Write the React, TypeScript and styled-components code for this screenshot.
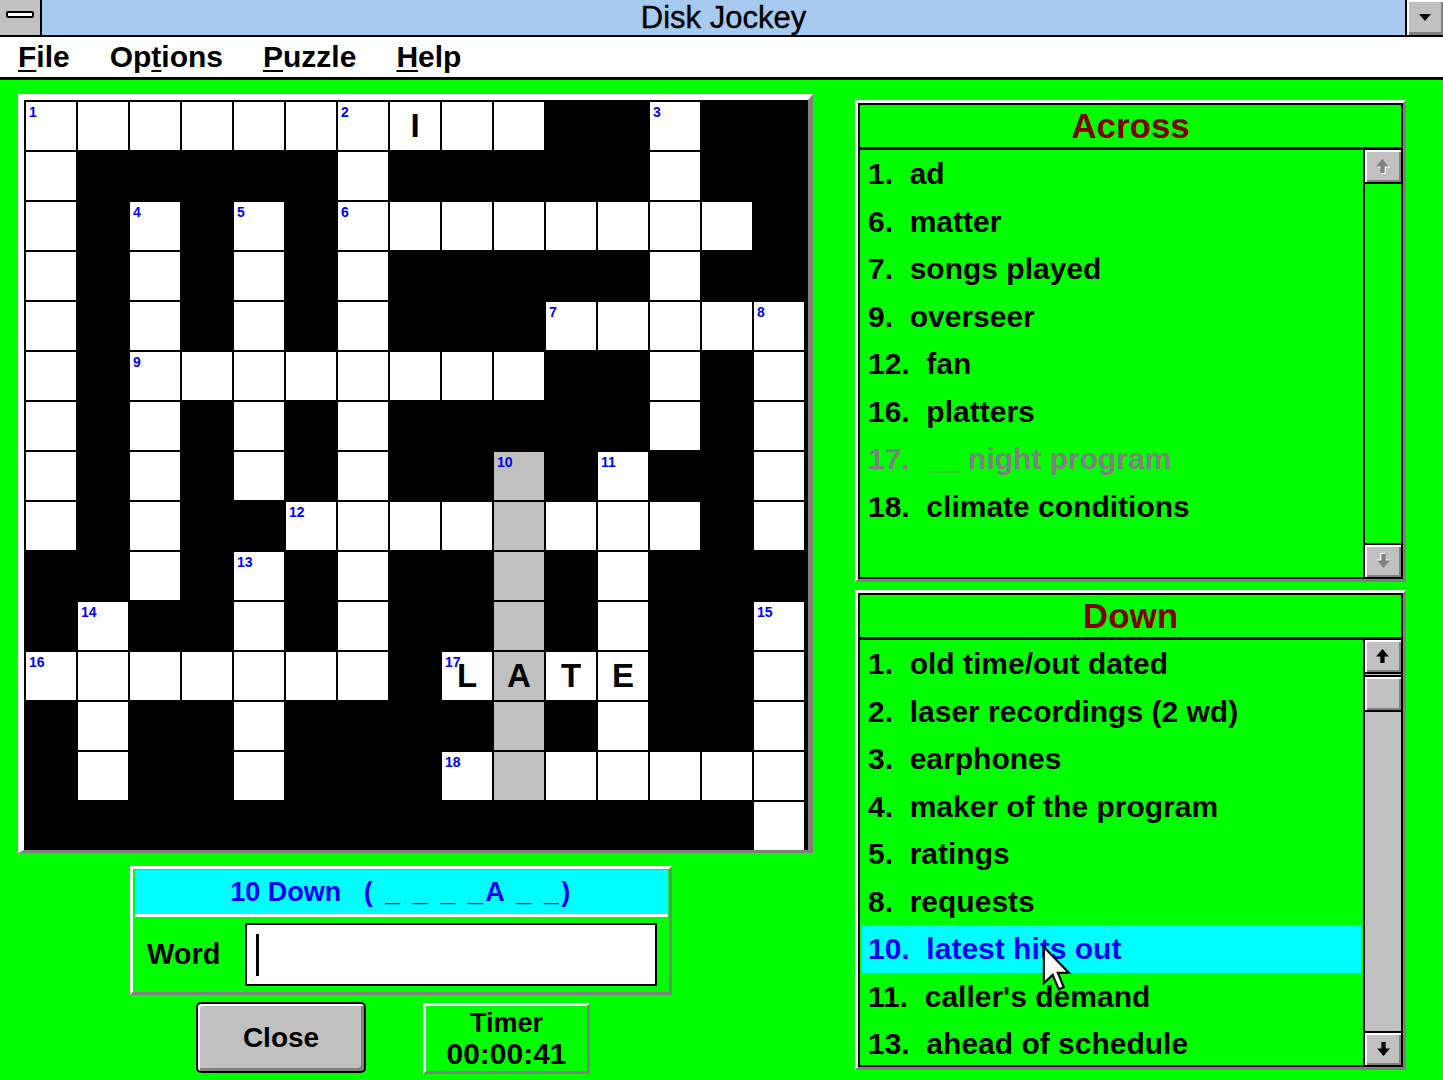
import React from "react";
import styled, { createGlobalStyle } from "styled-components";

const GlobalStyle = createGlobalStyle`
  html, body {
    margin: 0;
    padding: 0;
  }
  body {
    width: 1443px;
    height: 1080px;
    overflow: hidden;
    background: #00ff00;
    font-family: "Liberation Sans", Arial, sans-serif;
  }
`;

// grid map: '#' black, '.' white, 'g' highlighted (current word)
const GRID = [
  "..........##.##",
  ".#####.#####.##",
  ".#.#.#........#",
  ".#.#.#.#####.##",
  ".#.#.#.###.....",
  ".#........##.#.",
  ".#.#.#.#####.#.",
  ".#.#.#.##g#.##.",
  ".#.##....g...#.",
  "##.#.#.##g#.###",
  "#.##.#.##g#.##.",
  ".......#.g..##.",
  "#.##.####g#.##.",
  "#.##.###.g.....",
  "##############.",
];

const NUMBERS: Record<string, number> = {
  "0-0": 1, "0-6": 2, "0-12": 3, "2-2": 4, "2-4": 5, "2-6": 6,
  "4-10": 7, "4-14": 8, "5-2": 9, "7-9": 10, "7-11": 11, "8-5": 12,
  "9-4": 13, "10-1": 14, "10-14": 15, "11-0": 16, "11-8": 17, "13-8": 18,
};

const LETTERS: Record<string, string> = {
  "0-7": "I", "11-8": "L", "11-9": "A", "11-10": "T", "11-11": "E",
};

type Clue = { n: number; text: string; state?: "done" | "active" };

const ACROSS: Clue[] = [
  { n: 1, text: "ad" },
  { n: 6, text: "matter" },
  { n: 7, text: "songs played" },
  { n: 9, text: "overseer" },
  { n: 12, text: "fan" },
  { n: 16, text: "platters" },
  { n: 17, text: "__ night program", state: "done" },
  { n: 18, text: "climate conditions" },
];

const DOWN: Clue[] = [
  { n: 1, text: "old time/out dated" },
  { n: 2, text: "laser recordings (2 wd)" },
  { n: 3, text: "earphones" },
  { n: 4, text: "maker of the program" },
  { n: 5, text: "ratings" },
  { n: 8, text: "requests" },
  { n: 10, text: "latest hits out", state: "active" },
  { n: 11, text: "caller's demand" },
  { n: 13, text: "ahead of schedule" },
];

function ArrowIcon({ dir, dim }: { dir: "up" | "down"; dim?: boolean }) {
  const pts = "7,1 13,8 9,8 9,14 5,14 5,8 1,8";
  return (
    <svg width="16" height="16" viewBox="0 0 15 15" style={{ transform: dir === "down" ? "rotate(180deg)" : undefined }}>
      {dim && <polygon points={pts} fill="#ffffff" transform="translate(1 1)" />}
      <polygon points={pts} fill={dim ? "#808080" : "#000000"} />
    </svg>
  );
}

function Pointer() {
  return (
    <svg width="30" height="46" viewBox="0 0 13 21">
      <polygon
        points="0.5,0.5 0.5,17 4.5,13.2 7.3,19.8 9.6,18.8 6.9,12.3 12,12.3"
        fill="#ffffff"
        stroke="#000000"
        strokeWidth="1"
        strokeLinejoin="miter"
      />
    </svg>
  );
}

function ClueBox({ title, clues, scroll }: { title: string; clues: Clue[]; scroll: "idle" | "live" }) {
  return (
    <Panel>
      <PanelInner>
        <PanelHeader>{title}</PanelHeader>
        <PanelBody>
          <ClueList>
            {clues.map((c) => (
              <ClueRow key={c.n} $state={c.state}>
                {`${c.n}.  ${c.text}`}
                {c.state === "active" && (
                  <PointerSpot>
                    <Pointer />
                  </PointerSpot>
                )}
              </ClueRow>
            ))}
          </ClueList>
          <ScrollBar $live={scroll === "live"}>
            <ScrollButton $edge="top">
              <ArrowIcon dir="up" dim={scroll === "idle"} />
            </ScrollButton>
            {scroll === "live" && <ScrollThumb />}
            <ScrollSpacer />
            <ScrollButton $edge="bottom">
              <ArrowIcon dir="down" dim={scroll === "idle"} />
            </ScrollButton>
          </ScrollBar>
        </PanelBody>
      </PanelInner>
    </Panel>
  );
}

export default function App() {
  return (
    <>
      <GlobalStyle />
      <Window>
        <TitleBar>
          <SysBox>
            <SysBar />
          </SysBox>
          <Title>Disk Jockey</Title>
          <MinBox>
            <svg width="12" height="8" viewBox="0 0 12 8">
              <polygon points="0,0 12,0 6,7" fill="#000" />
            </svg>
          </MinBox>
        </TitleBar>
        <MenuBar>
          <MenuItem><u>F</u>ile</MenuItem>
          <MenuItem>Op<u>t</u>ions</MenuItem>
          <MenuItem><u>P</u>uzzle</MenuItem>
          <MenuItem><u>H</u>elp</MenuItem>
        </MenuBar>
        <Main>
          <LeftCol>
            <BoardFrame>
              {GRID.map((row, r) =>
                row.split("").map((ch, c) => {
                  const key = `${r}-${c}`;
                  const kind = ch === "#" ? "black" : ch === "g" ? "gray" : "white";
                  return (
                    <Cell key={key} $kind={kind}>
                      {NUMBERS[key] && <CellNum>{NUMBERS[key]}</CellNum>}
                      {LETTERS[key]}
                    </Cell>
                  );
                })
              )}
            </BoardFrame>
            <WordPanel>
              <WordHeader>
                {"10 Down   "}
                <Pattern>{"( _ _ _ _A _ _)"}</Pattern>
              </WordHeader>
              <WordBody>
                <WordLabel>Word</WordLabel>
                <WordInput>
                  <Caret />
                </WordInput>
              </WordBody>
            </WordPanel>
            <ButtonRow>
              <CloseButton>Close</CloseButton>
              <TimerBox>
                <TimerLabel>Timer</TimerLabel>
                <TimerValue>00:00:41</TimerValue>
              </TimerBox>
            </ButtonRow>
          </LeftCol>
          <RightCol>
            <ClueBox title="Across" clues={ACROSS} scroll="idle" />
            <ClueBox title="Down" clues={DOWN} scroll="live" />
          </RightCol>
        </Main>
      </Window>
    </>
  );
}

const Window = styled.div`
  width: 1443px;
  height: 1080px;
  display: flex;
  flex-direction: column;
  background: #00ff00;
`;

const TitleBar = styled.div`
  display: flex;
  align-items: stretch;
  height: 35px;
  background: #a6caf0;
  border-bottom: 2px solid #000;
`;

const SysBox = styled.div`
  width: 40px;
  background: #c0c0c0;
  border-right: 2px solid #000;
  display: flex;
  align-items: center;
  justify-content: center;
`;

const SysBar = styled.div`
  width: 24px;
  height: 3px;
  background: #fff;
  border: 2px solid #000;
  border-radius: 2px;
  margin-top: -6px;
`;

const Title = styled.div`
  flex: 1;
  text-align: center;
  font-size: 31px;
  line-height: 35px;
  color: #000;
  -webkit-text-stroke: 0.4px #000;
`;

const MinBox = styled.div`
  width: 36px;
  background: #c0c0c0;
  border-left: 2px solid #000;
  box-shadow: inset 2px 2px 0 #fff, inset -2px -3px 0 #808080;
  display: flex;
  align-items: center;
  justify-content: center;
`;

const MenuBar = styled.div`
  display: flex;
  align-items: center;
  gap: 40px;
  height: 40px;
  padding-left: 18px;
  background: #fff;
  border-bottom: 3px solid #000;
`;

const MenuItem = styled.div`
  font-size: 30px;
  font-weight: 700;
  color: #000;
  line-height: 40px;

  u {
    text-decoration-thickness: 2px;
    text-underline-offset: 3px;
  }
`;

const Main = styled.div`
  flex: 1;
  display: flex;
  padding: 14px 0 0 18px;
`;

const LeftCol = styled.div`
  display: flex;
  flex-direction: column;
`;

const BoardFrame = styled.div`
  display: grid;
  grid-template-columns: repeat(15, 50px);
  grid-auto-rows: 48px;
  gap: 2px;
  padding: 2px 4px 0 2px;
  background: #000;
  border-top: 6px solid #fff;
  border-left: 6px solid #fff;
  border-right: 5px solid #808080;
  border-bottom: 3px solid #808080;
  width: max-content;
`;

const Cell = styled.div<{ $kind: "black" | "white" | "gray" }>`
  position: relative;
  background: ${(p) => (p.$kind === "black" ? "#000" : p.$kind === "gray" ? "#c0c0c0" : "#fff")};
  display: flex;
  align-items: center;
  justify-content: center;
  font-size: 33px;
  font-weight: 700;
  color: #000;
`;

const CellNum = styled.span`
  position: absolute;
  top: 3px;
  left: 3px;
  font-size: 14px;
  line-height: 15px;
  font-weight: 700;
  color: #0000ff;
`;

const WordPanel = styled.div`
  margin: 13px 0 0 112px;
  width: 536px;
  height: 123px;
  border-top: 3px solid #fff;
  border-left: 3px solid #fff;
  border-right: 3px solid #808080;
  border-bottom: 3px solid #808080;
  display: flex;
  flex-direction: column;
`;

const WordHeader = styled.div`
  height: 44px;
  margin: 1px 1px 0 2px;
  background: #00ffff;
  border-bottom: 3px solid #fff;
  color: #0000ff;
  font-size: 27px;
  font-weight: 700;
  line-height: 44px;
  text-align: center;
  white-space: pre;
`;

const Pattern = styled.span`
  letter-spacing: 2.5px;
`;

const WordBody = styled.div`
  flex: 1;
  display: flex;
  align-items: center;
  padding-left: 14px;
  gap: 24px;
`;

const WordLabel = styled.div`
  font-size: 29px;
  font-weight: 700;
  color: #000;
`;

const WordInput = styled.div`
  width: 399px;
  height: 59px;
  background: #fff;
  border: 2px solid #000;
  display: flex;
  align-items: center;
  padding-left: 9px;
  box-sizing: content-box;
`;

const Caret = styled.div`
  width: 3px;
  height: 42px;
  background: #000;
`;

const ButtonRow = styled.div`
  display: flex;
  margin: 7px 0 0 178px;
  gap: 57px;
`;

const CloseButton = styled.div`
  width: 166px;
  height: 67px;
  background: #c0c0c0;
  border: 2px solid #000;
  border-radius: 5px;
  box-shadow: inset 2px 2px 0 #fff, inset -3px -3px 0 #808080;
  display: flex;
  align-items: center;
  justify-content: center;
  font-size: 28px;
  font-weight: 700;
  color: #000;
`;

const TimerBox = styled.div`
  width: 161px;
  height: 65px;
  margin-top: 1px;
  border-top: 3px solid #fff;
  border-left: 3px solid #fff;
  border-right: 3px solid #808080;
  border-bottom: 3px solid #808080;
  display: flex;
  flex-direction: column;
  align-items: center;
  justify-content: center;
  color: #000;
  font-weight: 700;
`;

const TimerLabel = styled.div`
  font-size: 27px;
  line-height: 30px;
`;

const TimerValue = styled.div`
  font-size: 30px;
  line-height: 32px;
`;

const RightCol = styled.div`
  display: flex;
  flex-direction: column;
  gap: 8px;
  margin: 6px 0 0 42px;
  width: 551px;
`;

const Panel = styled.div`
  height: 476px;
  border-top: 3px solid #fff;
  border-left: 3px solid #fff;
  border-right: 3px solid #808080;
  border-bottom: 3px solid #808080;
  display: flex;

  & + & {
    height: 474px;
  }
`;

const PanelInner = styled.div`
  flex: 1;
  border: 2px solid #000;
  display: flex;
  flex-direction: column;
  min-width: 0;
`;

const PanelHeader = styled.div`
  height: 42px;
  border-bottom: 3px solid #000;
  color: #800000;
  font-size: 35px;
  font-weight: 700;
  line-height: 42px;
  text-align: center;
`;

const PanelBody = styled.div`
  flex: 1;
  display: flex;
  min-height: 0;
`;

const ClueList = styled.div`
  flex: 1;
  overflow: hidden;
  padding-right: 2px;
`;

const ClueRow = styled.div<{ $state?: "done" | "active" }>`
  position: relative;
  height: 47.5px;
  line-height: 47.5px;
  margin-left: 2px;
  padding-left: 6px;
  font-size: 30px;
  font-weight: 700;
  white-space: pre;
  color: ${(p) => (p.$state === "done" ? "#808080" : p.$state === "active" ? "#0000ff" : "#000")};
  background: ${(p) => (p.$state === "active" ? "#00ffff" : "transparent")};
`;

const PointerSpot = styled.div`
  position: absolute;
  left: 180px;
  top: 21px;
  width: 30px;
  height: 46px;
  z-index: 2;
  line-height: 0;
`;

const ScrollBar = styled.div<{ $live: boolean }>`
  width: 36px;
  border-left: 2px solid #000;
  background: ${(p) => (p.$live ? "#c0c0c0" : "transparent")};
  display: flex;
  flex-direction: column;
`;

const ScrollButton = styled.div<{ $edge: "top" | "bottom" }>`
  height: 32px;
  background: #c0c0c0;
  box-shadow: inset 2px 2px 0 #fff, inset -2px -2px 0 #808080;
  ${(p) => (p.$edge === "top" ? "border-bottom: 2px solid #000;" : "border-top: 2px solid #000;")}
  display: flex;
  align-items: center;
  justify-content: center;
`;

const ScrollThumb = styled.div`
  height: 33px;
  margin-top: 1px;
  background: #c0c0c0;
  box-shadow: inset 2px 2px 0 #fff, inset -2px -2px 0 #808080;
  border-top: 2px solid #000;
  border-bottom: 2px solid #000;
`;

const ScrollSpacer = styled.div`
  flex: 1;
`;
